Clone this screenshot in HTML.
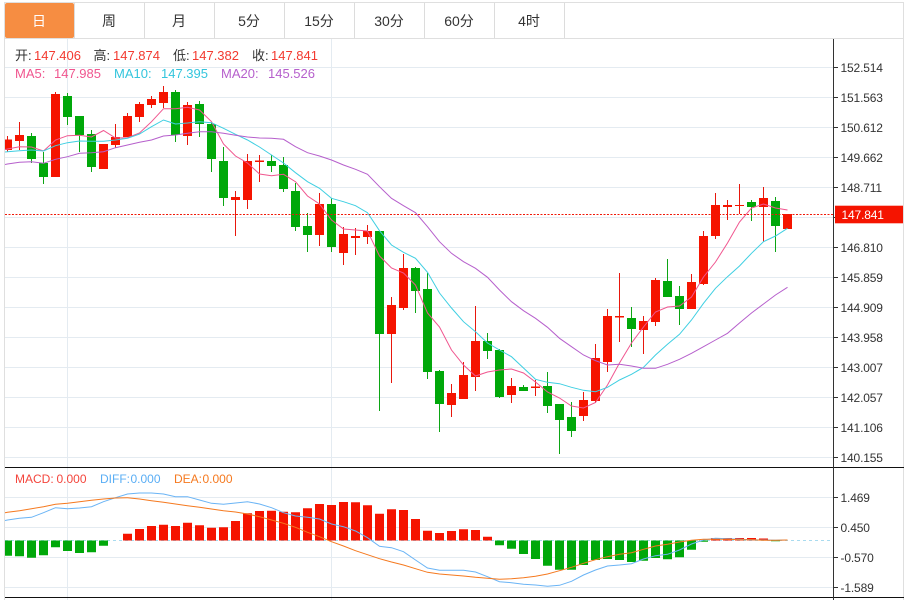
<!DOCTYPE html>
<html>
<head>
<meta charset="utf-8">
<title>K线图</title>
<style>
html,body{margin:0;padding:0;background:#fff;width:912px;height:600px;overflow:hidden}
svg{display:block;position:absolute;left:0;top:0}
text{font-family:"Liberation Sans","Noto Sans CJK SC",sans-serif}
.tab{font-size:14px;fill:#333;text-anchor:middle}
.ax{font-size:12px;fill:#333;letter-spacing:-.15px}
.t{font-size:13px}
.m{font-size:12px}
</style>
</head>
<body>
<svg width="912" height="600" viewBox="0 0 912 600" xmlns="http://www.w3.org/2000/svg">
<defs><clipPath id="c"><rect x="5" y="39" width="828" height="561"/></clipPath></defs>
<!-- frame -->
<path d="M4 2.5H903.5V600M4.5 2V600M4 38.5H904" fill="none" stroke="#dfdfdf" stroke-width="1"/>
<path d="M74.5 3V38M144.5 3V38M214.5 3V38M284.5 3V38M354.5 3V38M424.5 3V38M494.5 3V38M564.5 3V38" stroke="#dcdcdc" stroke-width="1"/>
<rect x="5" y="3" width="69" height="35" rx="2" fill="#f68d42"/>
<text class="tab" x="39" y="26" style="fill:#fff">日</text>
<text class="tab" x="109" y="26">周</text>
<text class="tab" x="179" y="26">月</text>
<text class="tab" x="249" y="26">5分</text>
<text class="tab" x="319" y="26">15分</text>
<text class="tab" x="389" y="26">30分</text>
<text class="tab" x="459" y="26">60分</text>
<text class="tab" x="529" y="26">4时</text>
<!-- grid -->
<path d="M5 67.5H833M5 97.5H833M5 127.5H833M5 157.5H833M5 187.5H833M5 217.5H833M5 247.5H833M5 277.5H833M5 307.5H833M5 337.5H833M5 367.5H833M5 397.5H833M5 427.5H833M5 457.5H833M5 497.5H833M5 527.5H833M5 557.5H833M5 587.5H833M67.5 39V600M331.5 39V600" fill="none" stroke="#e4ebf1" stroke-width="1"/>
<g clip-path="url(#c)">
<!-- red wicks -->
<path fill="none" stroke="#e8170c" stroke-width="1" d="M7.5 136V152M19.5 122V150M55.5 92V177M103.5 144V169M115.5 124V148M127.5 113V137M139.5 102V122M151.5 96V108M163.5 86V108M187.5 102V145M235.5 191V236M247.5 154V209M259.5 155V182M319.5 193V246M343.5 227V265M355.5 228V255M367.5 225V244M391.5 297V383M403.5 254V310M451.5 384V417M463.5 362V399M475.5 306V391M511.5 378V403M535.5 380V396M583.5 392V421M595.5 344V403M607.5 309V372M619.5 273V342M643.5 316V354M655.5 278V326M691.5 274V309M703.5 231V285M715.5 193V239M727.5 200V220M739.5 184V214M763.5 187V242M787.5 214V229"/>
<!-- green wicks -->
<path fill="none" stroke="#0ca514" stroke-width="1" d="M31.5 133V163M43.5 152V184M67.5 93V125M79.5 116V152M91.5 130V172M175.5 90V142M199.5 101V137M211.5 122V172M223.5 147V206M271.5 155V172M283.5 157V192M295.5 183V231M307.5 213V252M331.5 198V252M379.5 231V411M415.5 267V313M427.5 273V379M439.5 370V432M487.5 333V359M499.5 349V398M523.5 385V391M547.5 372V413M559.5 404V454M571.5 402V437M631.5 307V347M667.5 259V297M679.5 286V325M751.5 200V221M775.5 197V252"/>
<!-- red bodies -->
<path fill="#f51400" d="M5 139.5h7v10.5h-7zM15 135h9v6h-9zM51 94h9v83h-9zM99 144h9v25h-9zM111 137h9v8h-9zM123 116h9v21h-9zM135 104h9v13h-9zM147 99h9v6h-9zM159 92h9v11h-9zM183 105h9v31h-9zM231 197h9v3h-9zM243 161h9v39h-9zM255 160.500h9v1.500h-9zM315 204h9v31h-9zM339 234h9v19h-9zM351 236h9v2h-9zM363 231h9v6h-9zM387 305h9v29h-9zM399 268h9v40h-9zM447 393h9v12h-9zM459 375h9v24h-9zM471 341h9v36h-9zM507 386h9v9h-9zM531 386.500h9v1.500h-9zM579 400h9v16h-9zM591 358h9v43h-9zM603 316h9v46h-9zM615 316h9v1.500h-9zM639 321h9v9h-9zM651 280h9v42h-9zM687 282h9v27h-9zM699 236h9v48h-9zM711 205h9v31h-9zM723 205h9v2h-9zM735 205h9v1h-9zM759 198h9v9h-9zM783 214h9v15h-9z"/>
<!-- green bodies -->
<path fill="#00a80a" d="M27 136h9v23h-9zM39 163h9v14h-9zM63 96h9v21h-9zM75 116h9v19h-9zM87 134h9v33h-9zM171 92h9v43h-9zM195 104h9v20h-9zM207 124h9v35h-9zM219 161h9v37h-9zM267 161h9v5h-9zM279 165h9v24h-9zM291 191h9v36h-9zM303 226h9v9h-9zM327 204h9v43h-9zM375 231h9v103h-9zM411 268h9v23h-9zM423 289h9v83h-9zM435 371h9v33h-9zM483 341h9v10h-9zM495 350h9v47h-9zM519 387h9v4h-9zM543 386h9v20h-9zM555 404h9v16h-9zM567 417h9v14h-9zM627 318h9v11h-9zM663 281h9v16h-9zM675 296h9v13h-9zM747 202h9v5h-9zM771 201h9v25h-9z"/>
<!-- MA lines -->
<polyline fill="none" stroke="#f0568f" stroke-width="1" points="5,149.500 7.5,149 19.500,146.700 31.500,147 43.500,151 55.500,140 67.500,135.700 79.500,135.300 91.500,137 103.500,130.500 115.500,138 127.500,137.700 139.500,133 151.500,121.700 163.500,108.700 175.500,108.700 187.500,107.300 199.500,110 211.500,121.700 223.500,144 235.500,156 247.500,163 259.500,174 271.500,175.700 283.500,174.300 295.500,181.700 307.500,196 319.500,204 331.500,220 343.500,229 355.500,230 367.500,231 379.500,256 391.500,268 403.500,273 415.500,285 427.500,313 439.500,327 451.500,350 463.500,365 475.500,376 487.500,372 499.500,370 511.500,369 523.500,373 535.500,382 547.500,392 559.500,398 571.500,406 583.500,408 595.500,402.500 607.500,385 619.500,363 631.500,343 643.500,327 655.500,312 667.500,307 679.500,306 691.500,297 703.500,277 715.500,262 727.500,243 739.500,222 751.500,208 763.500,204 775.500,208 787.500,210"/>
<polyline fill="none" stroke="#3fcfe2" stroke-width="1" points="5,152 7.5,151.700 19.500,150.700 31.500,150 43.500,151 55.500,145.700 67.500,142.700 79.500,141 91.500,141.300 103.500,141.300 115.500,140 127.500,138.300 139.500,134 151.500,126.700 163.500,120 175.500,124 187.500,123 199.500,121.700 211.500,122.700 223.500,128.300 235.500,134.300 247.500,140 259.500,147 271.500,155 283.500,163 295.500,172.700 307.500,181.700 319.500,188.300 331.500,198.300 343.500,201.700 355.500,205.700 367.500,212.700 379.500,230.700 391.500,245 403.500,252.300 415.500,258.300 427.500,272.300 439.500,293 451.500,308 463.500,321.700 475.500,331.700 487.500,343 499.500,350 511.500,356.700 523.500,368 535.500,379.300 547.500,382.300 559.500,383.700 571.500,387.300 583.500,390.300 595.500,391.700 607.500,387.300 619.500,380 631.500,374.300 643.500,367.300 655.500,355 667.500,344.300 679.500,334.300 691.500,320 703.500,303.300 715.500,288.300 727.500,276.700 739.500,266 751.500,253.300 763.500,241.700 775.500,236 787.500,228.300"/>
<polyline fill="none" stroke="#b65fcc" stroke-width="1" points="5,164.500 7.5,164 19.500,162.300 31.500,161.700 43.500,163.300 55.500,159.300 67.500,156.700 79.500,153.300 91.500,152.700 103.500,151.700 115.500,147.700 127.500,145 139.500,142.300 151.500,140 163.500,136 175.500,135 187.500,133.300 199.500,131.700 211.500,131.700 223.500,133.300 235.500,135.300 247.500,137 259.500,138 271.500,138.300 283.500,139.300 295.500,146.700 307.500,152.700 319.500,156 331.500,160 343.500,165 355.500,169.300 367.500,174.300 379.500,186.700 391.500,198.300 403.500,205.700 415.500,212.700 427.500,226.700 439.500,241.700 451.500,253.300 463.500,261.700 475.500,268.300 487.500,277.300 499.500,290 511.500,301.700 523.500,310.700 535.500,318.300 547.500,327.300 559.500,338.300 571.500,346.700 583.500,355 595.500,360.700 607.500,365 619.500,364.300 631.500,366 643.500,368.300 655.500,368.300 667.500,364.300 679.500,359.300 691.500,353.300 703.500,346.700 715.500,340 727.500,333.300 739.500,323 751.500,313 763.500,304 775.500,295 787.500,287.300"/>
<!-- last price -->
<path d="M5 214.500H833" stroke="#f01808" stroke-width="1" stroke-dasharray="2 1.500" fill="none"/>
<!-- MACD -->
<path d="M5 540.500H830" stroke="#a9dbef" stroke-width="1" stroke-dasharray="3 3" fill="none"/>
<path fill="#f51400" d="M123 533.700h9v6.800h-9zM135 529h9v11.500h-9zM147 526h9v14.500h-9zM159 524.700h9v15.800h-9zM171 526h9v14.500h-9zM183 522.700h9v17.800h-9zM195 525.300h9v15.200h-9zM207 527.700h9v12.800h-9zM219 527.300h9v13.200h-9zM231 521h9v19.500h-9zM243 513.300h9v27.200h-9zM255 511h9v29.500h-9zM267 510.700h9v29.800h-9zM279 511.700h9v28.800h-9zM291 512.300h9v28.200h-9zM303 508.300h9v32.200h-9zM315 504h9v36.500h-9zM327 505h9v35.500h-9zM339 502h9v38.500h-9zM351 502.300h9v38.200h-9zM363 505.300h9v35.200h-9zM375 513.700h9v26.800h-9zM387 509.300h9v31.200h-9zM399 510h9v30.500h-9zM411 519h9v21.500h-9zM423 530.700h9v9.800h-9zM435 533h9v7.500h-9zM447 531h9v9.500h-9zM459 529.300h9v11.200h-9zM471 530h9v10.500h-9zM483 536.700h9v3.800h-9zM711 538h9v2.500h-9zM723 538h9v2.500h-9zM735 538h9v2.500h-9zM747 538h9v2.500h-9zM759 538.500h9v2h-9z"/>
<path fill="#00a80a" d="M5 540.500h7v15.200h-7zM15 540.500h9v15.800h-9zM27 540.500h9v17.200h-9zM39 540.500h9v14.800h-9zM51 540.500h9v6.800h-9zM63 540.500h9v10.500h-9zM75 540.500h9v12.500h-9zM87 540.500h9v11.800h-9zM99 540.500h9v5.200h-9zM495 540.500h9v4.800h-9zM507 540.500h9v8.200h-9zM519 540.500h9v13.500h-9zM531 540.500h9v18.500h-9zM543 540.500h9v25.200h-9zM555 540.500h9v29.200h-9zM567 540.500h9v29.200h-9zM579 540.500h9v24.500h-9zM591 540.500h9v19.500h-9zM603 540.500h9v18.500h-9zM615 540.500h9v19.500h-9zM627 540.500h9v21.500h-9zM639 540.500h9v20.200h-9zM651 540.500h9v17.500h-9zM663 540.500h9v18.800h-9zM675 540.500h9v16.800h-9zM687 540.500h9v9.200h-9zM699 540.500h9v1.200h-9zM771 540.500h9v.8h-9z"/>
<polyline fill="none" stroke="#6ab4f5" stroke-width="1" points="5,520.500 7.5,520 19.500,518.300 31.500,517.300 43.500,512.700 55.500,507.700 67.500,508.700 79.500,508 91.500,506.700 103.500,501.700 115.500,497.700 127.500,494 139.500,493 151.500,493 163.500,494 175.500,496.700 187.500,496.700 199.500,500 211.500,503.300 223.500,504.300 235.500,503 247.500,501.700 259.500,504 271.500,507.700 283.500,512.700 295.500,516 307.500,517.300 319.500,519 331.500,524 343.500,526.700 355.500,531 367.500,537.700 379.500,546.300 391.500,547.700 403.500,551.700 415.500,560 427.500,568 439.500,570.300 451.500,570.300 463.500,570.300 475.500,572 487.500,576.700 499.500,581.700 511.500,582.700 523.500,584.300 535.500,585 547.500,586.300 559.500,585.300 571.500,581.300 583.500,575 595.500,570 607.500,566 619.500,565 631.500,563.700 643.500,559 655.500,555.700 667.500,554.300 679.500,550 691.500,544 703.500,540 715.500,538.300 727.500,538.700 739.500,539.300 751.500,539.700 763.500,540 775.500,540.300 787.500,540"/>
<polyline fill="none" stroke="#f5791f" stroke-width="1" points="5,512.800 7.5,512.300 19.500,510.700 31.500,508.700 43.500,506.700 55.500,504.300 67.500,503.300 79.500,501.700 91.500,500.300 103.500,499 115.500,498 127.500,497.700 139.500,499 151.500,500.700 163.500,502.300 175.500,504 187.500,505.700 199.500,507.300 211.500,509 223.500,510.700 235.500,512 247.500,514 259.500,516.700 271.500,520 283.500,523.300 295.500,527.300 307.500,532.300 319.500,536.700 331.500,541.700 343.500,546 355.500,550.700 367.500,554.700 379.500,558.700 391.500,562 403.500,565 415.500,568.700 427.500,572.300 439.500,574 451.500,575 463.500,576 475.500,577.300 487.500,578.300 499.500,579.300 511.500,578.700 523.500,577.700 535.500,576.300 547.500,574 559.500,570.700 571.500,567.300 583.500,563.300 595.500,559.700 607.500,556.700 619.500,554.300 631.500,552.700 643.500,549.300 655.500,546 667.500,544.300 679.500,542 691.500,540.300 703.500,539.300 715.500,539.300 727.500,539.300 739.500,539.700 751.500,539.700 763.500,540.300 775.500,540.300 787.500,540"/>
</g>
<!-- separators and axis -->
<path d="M5 467.500H904M5 597.500H904" stroke="#111" stroke-width="1" fill="none"/>
<path d="M833.500 39V600" stroke="#333" stroke-width="1" fill="none"/>
<path d="M834 67.500h4M834 97.500h4M834 127.500h4M834 157.500h4M834 187.500h4M834 217.500h4M834 247.500h4M834 277.500h4M834 307.500h4M834 337.500h4M834 367.500h4M834 397.500h4M834 427.500h4M834 457.500h4M834 497.500h4M834 527.500h4M834 557.500h4M834 587.500h4" stroke="#333" stroke-width="1" fill="none"/>
<g class="ax">
<text class="ax" x="840.500" y="72">152.514</text>
<text class="ax" x="840.500" y="102">151.563</text>
<text class="ax" x="840.500" y="132">150.612</text>
<text class="ax" x="840.500" y="162">149.662</text>
<text class="ax" x="840.500" y="192">148.711</text>
<text class="ax" x="840.500" y="252">146.810</text>
<text class="ax" x="840.500" y="282">145.859</text>
<text class="ax" x="840.500" y="312">144.909</text>
<text class="ax" x="840.500" y="342">143.958</text>
<text class="ax" x="840.500" y="372">143.007</text>
<text class="ax" x="840.500" y="402">142.057</text>
<text class="ax" x="840.500" y="432">141.106</text>
<text class="ax" x="840.500" y="462">140.155</text>
<text class="ax" x="840.500" y="502">1.469</text>
<text class="ax" x="840.500" y="532">0.450</text>
<text class="ax" x="840.500" y="562">-0.570</text>
<text class="ax" x="840.500" y="592">-1.589</text>
</g>
<rect x="835" y="205.700" width="68" height="17.600" fill="#f51400"/>
<text class="ax" x="841.500" y="219" style="fill:#fff">147.841</text>
<!-- info -->
<g class="t">
<text class="t" x="15" y="60" fill="#333">开:</text><text class="t" x="34" y="60" fill="#f33a30">147.406</text>
<text class="t" x="93.500" y="60" fill="#333">高:</text><text class="t" x="113" y="60" fill="#f33a30">147.874</text>
<text class="t" x="173" y="60" fill="#333">低:</text><text class="t" x="192" y="60" fill="#f33a30">147.382</text>
<text class="t" x="252" y="60" fill="#333">收:</text><text class="t" x="271" y="60" fill="#f33a30">147.841</text>
<text class="t" x="15" y="78" fill="#f0568f">MA5:</text><text class="t" x="54" y="78" fill="#f0568f">147.985</text>
<text class="t" x="114" y="78" fill="#33c5dd">MA10:</text><text class="t" x="161" y="78" fill="#33c5dd">147.395</text>
<text class="t" x="221" y="78" fill="#b65fcc">MA20:</text><text class="t" x="268" y="78" fill="#b65fcc">145.526</text>
</g>
<text class="m" x="15" y="483" fill="#f4453c">MACD:</text><text class="m" x="56.500" y="483" fill="#f4453c">0.000</text>
<text class="m" x="100" y="483" fill="#5aaef5">DIFF:</text><text class="m" x="130.500" y="483" fill="#5aaef5">0.000</text>
<text class="m" x="174" y="483" fill="#f5791f">DEA:</text><text class="m" x="202.500" y="483" fill="#f5791f">0.000</text>
</svg>
</body>
</html>
